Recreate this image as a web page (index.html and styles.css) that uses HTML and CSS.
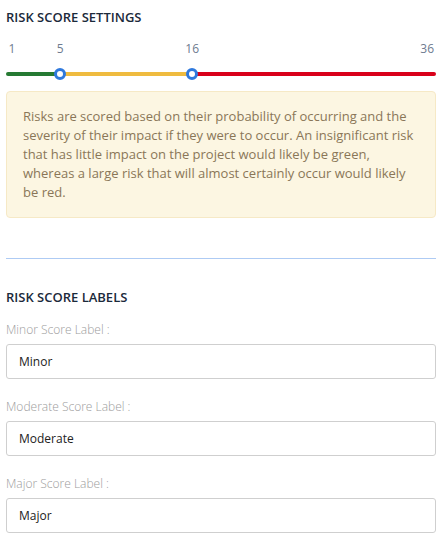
FILE: index.html
```html
<!DOCTYPE html>
<html lang="en">
<head>
  <meta charset="UTF-8" />
  <meta name="viewport" content="width=device-width, initial-scale=1.0" />
  <title>Risk Score Settings</title>
  <link rel="stylesheet" href="styles.css">
</head>
<body>
  <div class="container">
    <h3 class="section-title">Risk Score Settings</h3>

    <div class="slider">
      <div class="slider-scale">
        <span class="scale-num" style="left: 1.4%">1</span>
        <span class="scale-num" style="left: 12.6%">5</span>
        <span class="scale-num" style="left: 43.3%">16</span>
        <span class="scale-num scale-end">36</span>
      </div>
      <div class="slider-track">
        <div class="seg seg-green" style="width: 12.6%"></div>
        <div class="seg seg-yellow" style="width: 30.7%"></div>
        <div class="seg seg-red"></div>
        <span class="handle" style="left: 12.6%"></span>
        <span class="handle" style="left: 43.3%"></span>
      </div>
    </div>

    <div class="info-box">
      Risks are scored based on their probability of occurring and the severity of their impact if they were to occur. An insignificant risk that has little impact on the project would likely be green, whereas a large risk that will almost certainly occur would likely be red.
    </div>

    <div class="divider"></div>

    <h3 class="section-title">Risk Score Labels</h3>

    <div class="fields">
      <div class="field">
        <label for="minor">Minor Score Label :</label>
        <input id="minor" type="text" value="Minor">
      </div>
      <div class="field">
        <label for="moderate">Moderate Score Label :</label>
        <input id="moderate" type="text" value="Moderate">
      </div>
      <div class="field">
        <label for="major">Major Score Label :</label>
        <input id="major" type="text" value="Major">
      </div>
    </div>
  </div>
</body>
</html>
```

FILE: styles.css
```css
body {
  margin: 0;
  font-family: "Open Sans", Arial, sans-serif;
  background-color: #fff;
  color: #333;
}

.container {
  padding: 8px 3px 0 6px;
}

.section-title {
  margin: 0;
  font-size: 13px;
  font-weight: 600;
  text-transform: uppercase;
  color: #1b2a3b;
  line-height: 18px;
}

.slider {
  margin-top: 14px;
}

.slider-scale {
  position: relative;
  height: 18px;
}

.scale-num {
  position: absolute;
  top: 0;
  transform: translateX(-50%);
  font-size: 12px;
  line-height: 18px;
  color: #6e7b8f;
}

.scale-end {
  left: auto;
  right: 2px;
  transform: none;
}

.slider-track {
  position: relative;
  display: flex;
  height: 4px;
  margin-top: 14px;
  border-radius: 2px;
}

.seg {
  height: 4px;
}

.seg-green {
  background-color: #267a33;
  border-radius: 2px 0 0 2px;
}

.seg-yellow {
  background-color: #efbb3f;
}

.seg-red {
  flex: 1;
  background-color: #d9001a;
  border-radius: 0 2px 2px 0;
}

.handle {
  position: absolute;
  top: -4px;
  width: 6px;
  height: 6px;
  margin-left: -6px;
  border: 3px solid #2f79dd;
  border-radius: 50%;
  background-color: #fff;
}

.info-box {
  margin-top: 15px;
  padding: 15px 16px;
  background-color: #fcf6e2;
  border: 1px solid #f6e9c6;
  border-radius: 4px;
  font-size: 13px;
  line-height: 19px;
  color: #8a7658;
}

.divider {
  height: 1px;
  margin: 40px 0 29px;
  background-color: #aecbf4;
}

.fields {
  display: flex;
  flex-direction: column;
  gap: 19px;
  margin-top: 15px;
}

.field label {
  display: block;
  font-size: 12px;
  font-weight: 300;
  line-height: 17px;
  color: #9c9c9c;
  margin-bottom: 6px;
}

.field input {
  display: block;
  width: 100%;
  height: 35px;
  box-sizing: border-box;
  padding: 0 12px;
  font-family: "Open Sans", Arial, sans-serif;
  font-size: 12px;
  color: #222;
  border: 1px solid #cfcfcf;
  border-radius: 3px;
  background-color: #fff;
}
```
